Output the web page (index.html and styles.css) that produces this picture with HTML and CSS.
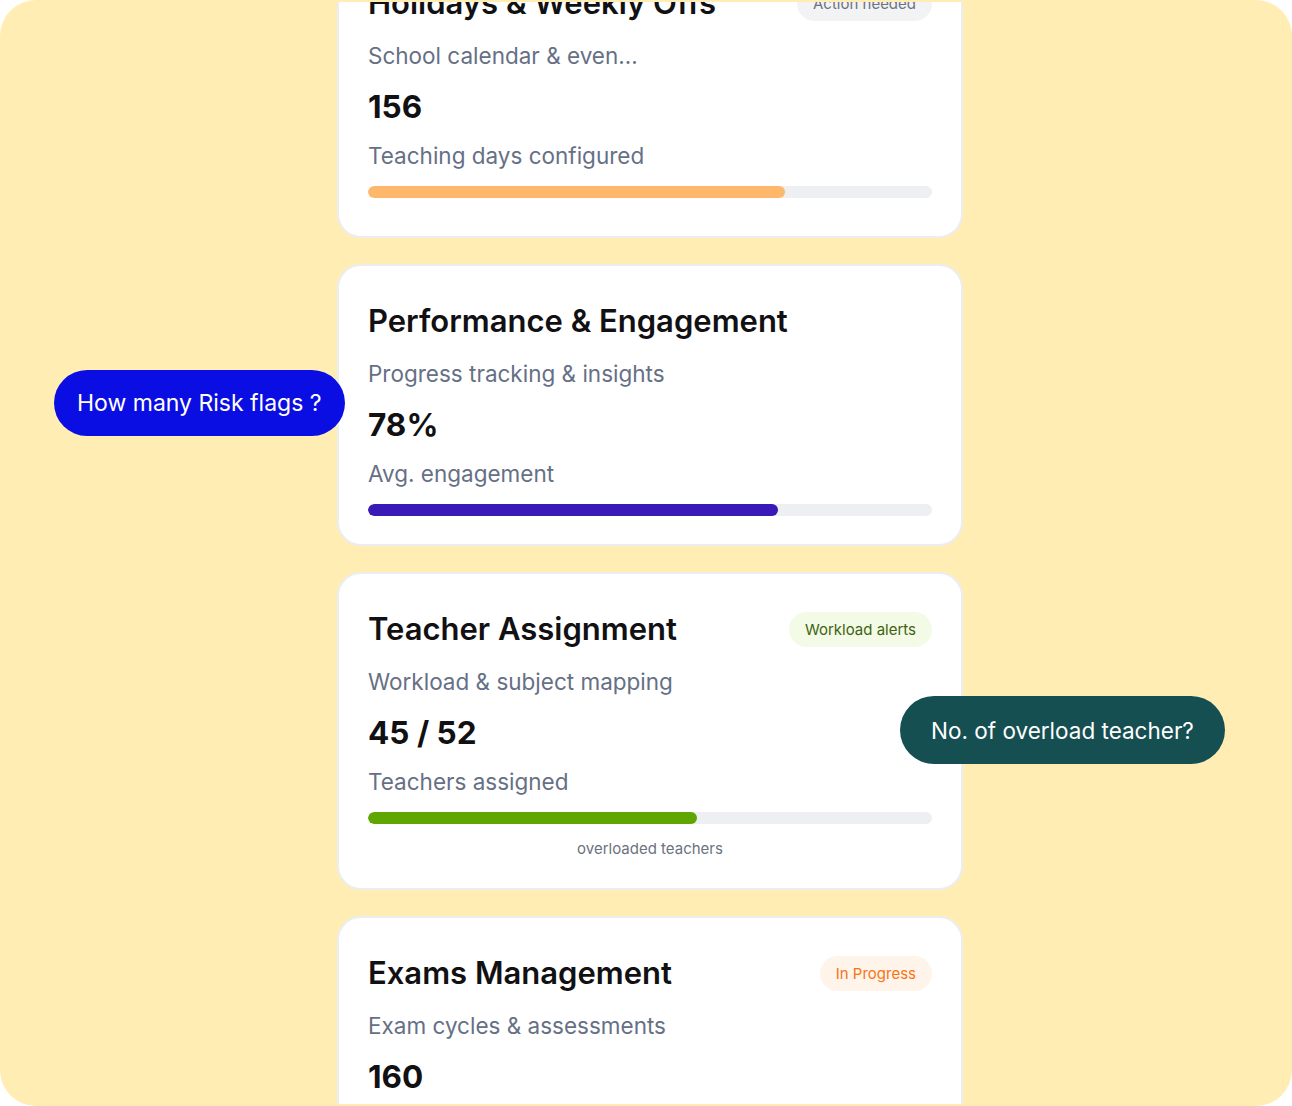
FILE: index.html
```html
<!DOCTYPE html>
<html lang="en">
<head>
<meta charset="utf-8">
<title>Dashboard</title>
<link rel="stylesheet" href="styles.css">
</head>
<body>
<div class="panel">
  <div class="scroll">
    <div class="column">
      <section class="card card-first">
        <div class="card-head">
          <h2 class="card-title">Holidays &amp; Weekly Offs</h2>
          <span class="badge badge-gray">Action needed</span>
        </div>
        <p class="card-sub">School calendar &amp; even...</p>
        <p class="card-value">156</p>
        <p class="card-label">Teaching days configured</p>
        <div class="track"><div class="fill fill-orange" style="width:74%"></div></div>
      </section>

      <section class="card">
        <div class="card-head">
          <h2 class="card-title">Performance &amp; Engagement</h2>
        </div>
        <p class="card-sub">Progress tracking &amp; insights</p>
        <p class="card-value">78%</p>
        <p class="card-label">Avg. engagement</p>
        <div class="track"><div class="fill fill-purple" style="width:72.7%"></div></div>
      </section>

      <section class="card">
        <div class="card-head">
          <h2 class="card-title">Teacher Assignment</h2>
          <span class="badge badge-green">Workload alerts</span>
        </div>
        <p class="card-sub">Workload &amp; subject mapping</p>
        <p class="card-value">45 / 52</p>
        <p class="card-label">Teachers assigned</p>
        <div class="track"><div class="fill fill-green" style="width:58.3%"></div></div>
        <p class="card-note">overloaded teachers</p>
      </section>

      <section class="card">
        <div class="card-head">
          <h2 class="card-title">Exams Management</h2>
          <span class="badge badge-orange">In Progress</span>
        </div>
        <p class="card-sub">Exam cycles &amp; assessments</p>
        <p class="card-value">160</p>
        <p class="card-label">Exams scheduled</p>
        <div class="track"><div class="fill fill-orange" style="width:60%"></div></div>
      </section>
    </div>
  </div>
  <div class="bubble bubble-blue">How many Risk flags ?</div>
  <div class="bubble bubble-teal">No. of overload teacher?</div>
</div>
</body>
</html>
```

FILE: styles.css
```css
* { box-sizing: border-box; }

html, body {
  margin: 0;
  padding: 0;
  background: #ffffff;
}

body {
  font-family: Inter, "Noto Sans", "Liberation Sans", sans-serif;
  width: 1292px;
  height: 1106px;
  overflow: hidden;
}

.panel {
  position: relative;
  width: 1292px;
  height: 1106px;
  background: #ffedb3;
  border-radius: 36px;
  padding: 2px 0;
}

.scroll {
  height: 100%;
  overflow: hidden;
}

.column {
  display: flex;
  flex-direction: column;
  gap: 26px;
  width: 626px;
  margin-left: 337px;
  margin-top: -56px;
}

.card {
  background: #ffffff;
  border: 2px solid #ecedf1;
  border-radius: 24px;
  padding: 37px 29px 28px 29px;
}

.card-first {
  padding-bottom: 38px;
}

.card-head {
  display: flex;
  align-items: center;
  justify-content: space-between;
  height: 36px;
}

.card-title {
  margin: 0;
  font-size: 31px;
  line-height: 36px;
  font-weight: 600;
  color: #111114;
}

.badge {
  display: inline-block;
  height: 35px;
  line-height: 35px;
  padding: 0 16px;
  border-radius: 18px;
  font-size: 15px;
  white-space: nowrap;
}

.badge-gray { background: #f2f3f5; color: #6b7280; }
.badge-green { background: #f3fbe6; color: #3f6212; }
.badge-orange { background: #fff4ea; color: #f97316; }

.card-sub {
  margin: 19px 0 0;
  font-size: 22.5px;
  line-height: 32px;
  color: #667085;
}

.card-value {
  margin: 17px 0 0;
  font-size: 31.5px;
  line-height: 36px;
  font-weight: 700;
  color: #111114;
}

.card-label {
  margin: 15px 0 0;
  font-size: 22.5px;
  line-height: 32px;
  color: #667085;
}

.track {
  margin-top: 14px;
  height: 12px;
  border-radius: 6px;
  background: #eeeff3;
  overflow: hidden;
}

.fill {
  height: 100%;
  border-radius: 6px;
}

.fill-orange { background: #ffb86b; }
.fill-purple { background: #3a1ab6; }
.fill-green { background: #5fa600; }

.card-note {
  margin: 14px 0 0;
  font-size: 15px;
  line-height: 22px;
  text-align: center;
  color: #6b7280;
}

.bubble {
  position: absolute;
  display: flex;
  align-items: center;
  border-radius: 34px;
  color: #ffffff;
  white-space: nowrap;
}

.bubble-blue {
  left: 54px;
  top: 370px;
  height: 66px;
  padding: 0 23px;
  font-size: 23px;
  background: #0b0ee2;
}

.bubble-teal {
  left: 900px;
  top: 696px;
  height: 68px;
  padding: 0 31px;
  font-size: 22.5px;
  background: #164f52;
}
```
